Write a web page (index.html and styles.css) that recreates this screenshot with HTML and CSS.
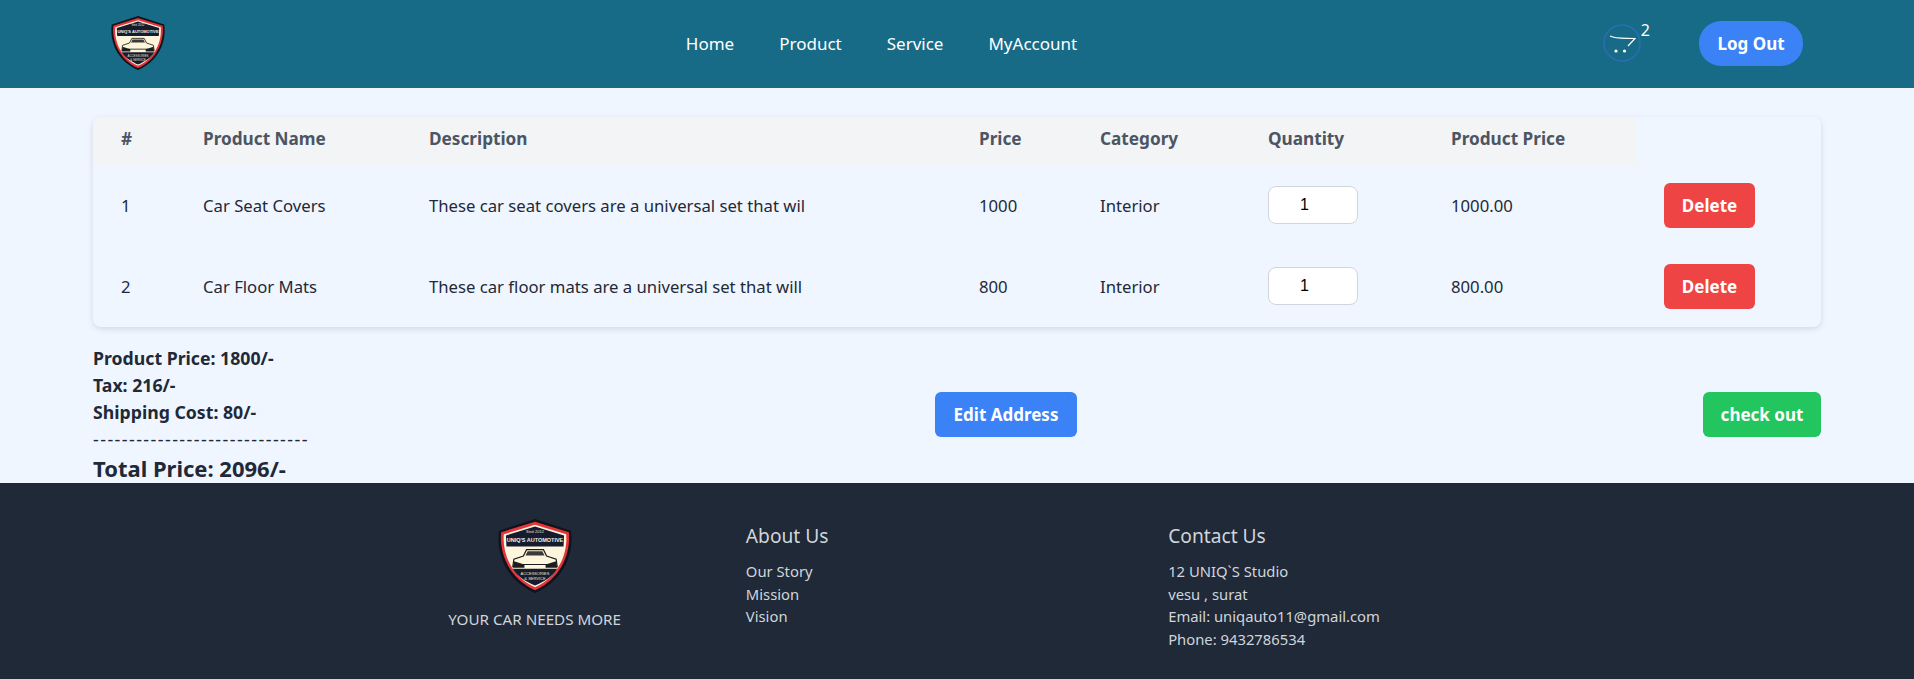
FILE: index.html
```html
<!DOCTYPE html>
<html lang="en">
<head>
    <meta charset="UTF-8">
    <meta name="viewport" content="width=device-width, initial-scale=1.0">
    <title>Cart</title>
    <link rel="stylesheet" href="styles.css">
</head>
<body>
    <header class="topbar">
        <a class="topbar-logo" href="#">
            <svg width="54" height="54" viewBox="0 0 70 70">
                <path d="M35 0 L69 11 C72 32 63 58 35 70 C7 58 -2 32 1 11 Z" fill="#10131c"/>
                <path d="M35 2.500 L67 12.500 C69 32 60 56 35 67.500 C10 56 1 32 3 12.500 Z" fill="#e5353c"/>
                <path d="M35 5.500 L64.500 14.500 C66 32 58 54 35 64.500 C12 54 4 32 5.500 14.500 Z" fill="#fdf6dc"/>
                <path d="M35 7 L62.500 15.500 L62 26 L8 26 L7.500 15.500 Z" fill="#161c2e"/>
                <path d="M14 47 L56 47 C52 54 44 59 35 63 C26 59 18 54 14 47 Z" fill="#161c2e"/>
                <text class="logo-small" x="35" y="13.500" text-anchor="middle">Sinit 2012</text>
                <text class="logo-name" x="35" y="22" text-anchor="middle">UNIQ'S AUTOMOTIVE</text>
                <path d="M14 45 L15 38 L24 35 L27 29 L43 29 L46 35 L55 38 L56 45 L47 43 L23 43 Z" fill="#fdf6dc" stroke="#1c1c1c" stroke-width="1.100"/>
                <path d="M26 34.500 L44 34.500 L42 30.500 L28 30.500 Z" fill="#3a3a3a"/>
                <path d="M14 46 L25 46 L25 43 L15 40 Z M56 46 L45 46 L45 43 L55 40 Z" fill="#1c1c1c"/>
                <text class="logo-small" x="35" y="52.500" text-anchor="middle">ACCESSORIES</text>
                <text class="logo-small" x="35" y="58" text-anchor="middle">&amp; SERVICE</text>
            </svg>
        </a>
        <nav class="topnav">
            <a href="#">Home</a>
            <a href="#">Product</a>
            <a href="#">Service</a>
            <a href="#">MyAccount</a>
        </nav>
        <div class="topbar-right">
            <a class="cart" href="#">
                <svg class="cart-icon" width="38" height="38" viewBox="0 0 38 38">
                    <circle cx="19" cy="19" r="18" fill="none" stroke="#2b6cb8" stroke-width="1.500"/>
                    <path d="M7 12 C13 15 21 14 32 14.500 L25 22" fill="none" stroke="#fff" stroke-width="1.200"/>
                    <circle cx="13" cy="27" r="1.600" fill="#fff"/>
                    <circle cx="21.500" cy="27" r="1.600" fill="#fff"/>
                </svg>
                <span class="cart-count">2</span>
            </a>
            <button class="btn btn-logout">Log Out</button>
        </div>
    </header>

    <main class="page">
        <div class="cart-card">
            <table class="cart-table">
                <colgroup>
                    <col class="c1"><col class="c2"><col class="c3"><col class="c4">
                    <col class="c5"><col class="c6"><col class="c7"><col class="c8">
                </colgroup>
                <thead>
                    <tr>
                        <th>#</th>
                        <th>Product Name</th>
                        <th>Description</th>
                        <th>Price</th>
                        <th>Category</th>
                        <th>Quantity</th>
                        <th>Product Price</th>
                    </tr>
                </thead>
                <tbody>
                    <tr>
                        <td>1</td>
                        <td>Car Seat Covers</td>
                        <td>These car seat covers are a universal set that wil</td>
                        <td>1000</td>
                        <td>Interior</td>
                        <td><input class="qty" type="number" value="1"></td>
                        <td>1000.00</td>
                        <td><button class="btn btn-delete">Delete</button></td>
                    </tr>
                    <tr>
                        <td>2</td>
                        <td>Car Floor Mats</td>
                        <td>These car floor mats are a universal set that will</td>
                        <td>800</td>
                        <td>Interior</td>
                        <td><input class="qty" type="number" value="1"></td>
                        <td>800.00</td>
                        <td><button class="btn btn-delete">Delete</button></td>
                    </tr>
                </tbody>
            </table>
        </div>

        <div class="summary-row">
            <div class="summary">
                <p>Product Price: 1800/-</p>
                <p>Tax: 216/-</p>
                <p>Shipping Cost: 80/-</p>
                <p class="dashes">------------------------------</p>
                <p class="total">Total Price: 2096/-</p>
            </div>
            <button class="btn btn-edit">Edit Address</button>
            <button class="btn btn-checkout">check out</button>
        </div>
    </main>

    <footer class="footer">
        <div class="footer-grid">
            <div class="footer-brand">
                <svg width="74" height="74" viewBox="0 0 70 70">
                    <path d="M35 0 L69 11 C72 32 63 58 35 70 C7 58 -2 32 1 11 Z" fill="#10131c"/>
                    <path d="M35 2.500 L67 12.500 C69 32 60 56 35 67.500 C10 56 1 32 3 12.500 Z" fill="#e5353c"/>
                    <path d="M35 5.500 L64.500 14.500 C66 32 58 54 35 64.500 C12 54 4 32 5.500 14.500 Z" fill="#fdf6dc"/>
                    <path d="M35 7 L62.500 15.500 L62 26 L8 26 L7.500 15.500 Z" fill="#161c2e"/>
                    <path d="M14 47 L56 47 C52 54 44 59 35 63 C26 59 18 54 14 47 Z" fill="#161c2e"/>
                    <text class="logo-small" x="35" y="13.500" text-anchor="middle">Sinit 2012</text>
                    <text class="logo-name" x="35" y="22" text-anchor="middle">UNIQ'S AUTOMOTIVE</text>
                    <path d="M14 45 L15 38 L24 35 L27 29 L43 29 L46 35 L55 38 L56 45 L47 43 L23 43 Z" fill="#fdf6dc" stroke="#1c1c1c" stroke-width="1.100"/>
                    <path d="M26 34.500 L44 34.500 L42 30.500 L28 30.500 Z" fill="#3a3a3a"/>
                    <path d="M14 46 L25 46 L25 43 L15 40 Z M56 46 L45 46 L45 43 L55 40 Z" fill="#1c1c1c"/>
                    <text class="logo-small" x="35" y="52.500" text-anchor="middle">ACCESSORIES</text>
                    <text class="logo-small" x="35" y="58" text-anchor="middle">&amp; SERVICE</text>
                </svg>
                <p>YOUR CAR NEEDS MORE</p>
            </div>
            <div class="footer-col">
                <h4>About Us</h4>
                <p>Our Story</p>
                <p>Mission</p>
                <p>Vision</p>
            </div>
            <div class="footer-col">
                <h4>Contact Us</h4>
                <p>12 UNIQ`S Studio</p>
                <p>vesu , surat</p>
                <p>Email: uniqauto11@gmail.com</p>
                <p>Phone: 9432786534</p>
            </div>
        </div>
    </footer>
</body>
</html>
```

FILE: styles.css
```css
* {
    box-sizing: border-box;
}
body {
    margin: 0;
    font-family: "Noto Sans", "Open Sans", Arial, sans-serif;
    font-size: 16px;
    color: #1f2937;
    background-color: #eff6ff;
}
p {
    margin: 0;
}
a {
    color: inherit;
    text-decoration: none;
}
.logo-small {
    font-family: "Liberation Sans", Arial, sans-serif;
    font-size: 3.800px;
    fill: #e8e4d4;
}
.logo-name {
    font-family: "Liberation Sans", Arial, sans-serif;
    font-size: 5.200px;
    font-weight: bold;
    fill: #f2efe2;
}

/* header */
.topbar {
    height: 88px;
    background-color: #176b87;
    color: white;
    display: flex;
    justify-content: space-between;
    align-items: center;
    padding: 0 111px 2px;
}
.topbar-logo {
    display: flex;
}
.topnav {
    display: flex;
    gap: 45px;
    font-size: 17px;
}
.topbar-right {
    width: 205px;
    display: flex;
    justify-content: flex-end;
    align-items: center;
    gap: 49px;
}
.cart {
    display: flex;
    align-items: flex-start;
    height: 38px;
}
.cart-icon {
    flex: none;
}
.cart-count {
    font-size: 16px;
    line-height: 18px;
    margin-top: -3px;
}

/* buttons */
.btn {
    border: none;
    color: white;
    font-family: inherit;
    font-size: 17px;
    font-weight: bold;
    height: 45px;
    padding: 0;
    border-radius: 6px;
    cursor: pointer;
}
.btn-logout {
    width: 104px;
    flex: none;
    border-radius: 22px;
    background-color: #3b82f6;
}
.btn-delete {
    width: 91px;
    background-color: #ef4444;
}
.btn-edit {
    width: 142px;
    background-color: #3b82f6;
}
.btn-checkout {
    width: 118px;
    background-color: #22c55e;
}

/* table */
.page {
    height: 395px;
    padding: 29px 93px 0;
}
.cart-card {
    border-radius: 8px;
    overflow: hidden;
    box-shadow: 0 2px 6px rgba(0, 0, 0, 0.12);
}
.cart-table {
    width: 1729px;
    table-layout: fixed;
    border-collapse: collapse;
}
.c1 { width: 82px; }
.c2 { width: 226px; }
.c3 { width: 550px; }
.c4 { width: 121px; }
.c5 { width: 168px; }
.c6 { width: 183px; }
.c7 { width: 213px; }
.c8 { width: 186px; }
.cart-table th {
    height: 48px;
    padding: 0 0 6px 28px;
    font-size: 17.200px;
    text-align: left;
    color: #4b5563;
    background-color: #f3f4f6;
}
.cart-table td {
    height: 81px;
    padding: 0 0 1px 28px;
    font-size: 16.700px;
    white-space: nowrap;
}
.qty {
    width: 90px;
    height: 38px;
    padding: 0 10px 0 8px;
    text-align: center;
    font-family: "Liberation Sans", Arial, sans-serif;
    font-size: 16px;
    background: white;
    border: 1px solid #d1d5db;
    border-radius: 8px;
}

/* totals */
.summary-row {
    display: flex;
    justify-content: space-between;
    align-items: center;
    margin-top: 18px;
}
.summary {
    width: 216px;
    font-size: 17.700px;
    font-weight: bold;
    line-height: 27px;
}
.dashes {
    font-size: 18px;
    font-weight: normal;
    letter-spacing: 1.400px;
}
.total {
    font-size: 22px;
    line-height: 30px;
}

/* footer */
.footer {
    height: 196px;
    background-color: #1f2937;
    color: #d1d5db;
    font-size: 14.800px;
    line-height: 22.500px;
    padding-top: 38px;
}
.footer-grid {
    width: 1267px;
    margin: 0 auto;
    display: grid;
    grid-template-columns: repeat(3, 1fr);
}
.footer-brand {
    text-align: center;
    font-size: 15.200px;
}
.footer-brand svg {
    display: block;
    margin: -2px auto 15px;
}
.footer-col h4 {
    margin: 1px 0 10px;
    font-size: 19.200px;
    font-weight: normal;
    line-height: 28px;
}
```
